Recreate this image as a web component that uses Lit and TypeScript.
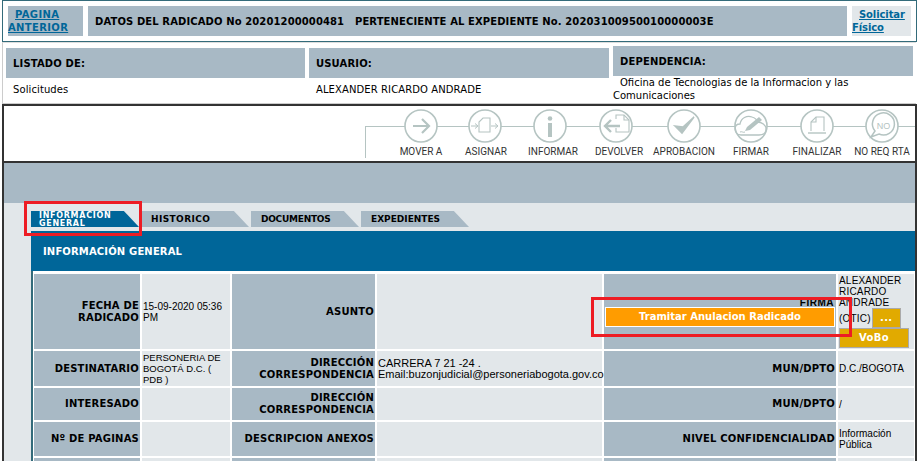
import { LitElement, html, css, svg } from "lit";
import { customElement } from "lit/decorators.js";

const ICONS: Record<string, unknown> = {
  mover: svg`<path d="M10 18h16M19 11l7 7-7 7" stroke-width="2.2"/>`,
  asignar: svg`<path d="M4 18h6M8 15.5l3 2.5-3 2.5" stroke-width="1"/><path d="M12 24v-10l4-4h7v14z" stroke-width="1.1"/><path d="M24 18h6M28 15.5l3 2.5-3 2.5" stroke-width="1"/>`,
  informar: svg`<circle cx="18" cy="10.5" r="2.3" fill="#b5c4c2" stroke="none"/><path d="M18 15v14" stroke-width="4"/>`,
  devolver: svg`<path d="M18 11v-4h8l5 5v12h-13v-4" stroke-width="1.1"/><path d="M26 7v5h5" stroke-width="1.1"/><path d="M7 18h15M13 12l-6 6 6 6" stroke-width="2.4"/>`,
  aprobacion: svg`<path d="M9 18l7 7 12-16-11 10z" fill="#b5c4c2" stroke-width="1.6"/>`,
  firmar: svg`<path d="M8 27c-4 0-6-3-6-6 0-3 2-5 5-5 1-6 7-9 12-7 3 1 5 3 5 5 5 0 9 3 9 7 0 4-3 6-7 6z" stroke-width="1.3"/><path d="M12 23l2-4 12-10 3 3-12 10z" fill="#b5c4c2" stroke="none"/><path d="M7 24c2-1 3 1 5 0" stroke-width="1"/>`,
  finalizar: svg`<path d="M12 23v-9l5-5h8v14" stroke-width="1.1"/><path d="M17 9v5h-5" stroke-width="1.1"/><path d="M9 25h18" stroke-width="1.4"/>`,
  noreq: svg`<path d="M7 29l4-6a11 11 0 1 1 4 3z" stroke-width="1.5"/><text x="19.5" y="20.5" text-anchor="middle" class="no">NO</text>`,
};

type Action = { icon: string; label: string; width: number; shift: number };

const ACTIONS: Action[] = [
  { icon: "mover", label: "MOVER A", width: 64, shift: 0 },
  { icon: "asignar", label: "ASIGNAR", width: 64, shift: 1 },
  { icon: "informar", label: "INFORMAR", width: 66, shift: 3 },
  { icon: "devolver", label: "DEVOLVER", width: 66, shift: 3 },
  { icon: "aprobacion", label: "APROBACION", width: 70, shift: 0 },
  { icon: "firmar", label: "FIRMAR", width: 64, shift: 0 },
  { icon: "finalizar", label: "FINALIZAR", width: 68, shift: 0 },
  { icon: "noreq", label: "NO REQ RTA", width: 62, shift: 0 },
];

@customElement("app-root")
export class AppRoot extends LitElement {
  static styles = css`
    :host {
      display: block;
      position: relative;
      width: 921px;
      height: 461px;
      overflow: hidden;
      background: #fff;
      font-family: "DejaVu Sans", Verdana, sans-serif;
      font-size: 10px;
      color: #000;
    }

    a {
      color: #006699;
      text-decoration: underline;
    }

    .top {
      display: grid;
      grid-template-columns: 75px 759px 59px;
      column-gap: 5px;
      width: 903px;
      height: 30px;
      margin-left: 2px;
      padding: 5px;
      border: 1px solid #336b7a;
      font-weight: bold;
    }

    .top > div {
      background: #a8b9c5;
    }

    .top .link {
      line-height: 13px;
      padding-top: 2px;
      height: 28px;
      text-indent: 7px;
      letter-spacing: 0.35px;
    }

    .top .title {
      display: flex;
      align-items: center;
      padding-left: 7px;
      white-space: pre;
      letter-spacing: 0.11px;
    }

    .top .fisico {
      background: #e2e7ea;
      letter-spacing: -0.1px;
    }

    .info {
      display: grid;
      grid-template-columns: 299px 300px 300px;
      column-gap: 4px;
      height: 62px;
      margin-left: 2px;
      width: 914px;
      box-sizing: border-box;
      padding: 5px 0 0 3px;
      border-top: 1px solid #ddd;
      border-left: 1px solid #ccc;
      border-bottom: 1px solid #ccc;
    }

    .info .head {
      display: flex;
      align-items: center;
      height: 30px;
      padding-left: 7px;
      background: #a8b9c5;
      font-weight: bold;
      letter-spacing: 0.15px;
    }

    .info .value {
      padding: 5px 0 0 7px;
      line-height: 13px;
      letter-spacing: 0.1px;
    }

    .info .dep {
      margin-top: -2px;
    }

    .info .dep .value {
      padding: 0;
      text-indent: 7px;
      letter-spacing: 0;
    }

    .frame {
      width: 911px;
      height: 357px;
      margin-left: 2px;
      border: 2px solid #333;
      border-bottom: none;
      overflow: hidden;
    }

    .toolbar {
      position: relative;
      display: flex;
      height: 57px;
      box-sizing: border-box;
      padding-left: 385px;
      border-bottom: 2px solid #333;
      background: #fff;
    }

    .toolbar::before {
      content: "";
      position: absolute;
      left: 361px;
      right: 0;
      top: 20px;
      height: 1px;
      background: #b5c4c2;
    }

    .toolbar::after {
      content: "";
      position: absolute;
      left: 361px;
      top: 20px;
      width: 1px;
      height: 32px;
      background: #b5c4c2;
    }

    .action {
      position: relative;
      z-index: 1;
      display: flex;
      flex-direction: column;
      align-items: center;
      padding-top: 2px;
    }

    .action svg {
      display: block;
      width: 36px;
      height: 36px;
      fill: none;
      stroke: #b5c4c2;
    }

    .action .ring {
      fill: #fff;
      stroke-width: 1.6;
    }

    .action .no {
      font: 9px "Liberation Sans", sans-serif;
      fill: #b5c4c2;
      stroke: none;
    }

    .action span {
      margin-top: 2px;
      font: 10px/11px Roboto, sans-serif;
      color: #333;
      white-space: nowrap;
    }

    .band {
      height: 40px;
      background: #a8b9c5;
    }

    .panel {
      height: 260px;
      background: #e2e7ea;
      padding: 8px 0 0 27px;
    }

    .tabs {
      display: flex;
      gap: 2px;
      height: 16px;
      margin-bottom: 4px;
    }

    .tab {
      display: flex;
      align-items: center;
      width: 108px;
      box-sizing: border-box;
      padding-left: 10px;
      background: #a8b9c5;
      clip-path: polygon(0 0, 86% 0, 100% 100%, 0 100%);
      font-weight: bold;
      font-size: 9px;
    }

    .tab.wide {
      letter-spacing: 0.4px;
    }

    .tab.tight {
      letter-spacing: -0.25px;
    }

    .tab.active {
      padding: 1px 0 0 8px;
      background: #006699;
      color: #fff;
      font-size: 8px;
      line-height: 8px;
      letter-spacing: 0.7px;
    }

    .section {
      display: flex;
      align-items: center;
      height: 40px;
      padding-left: 12px;
      background: #006699;
      color: #fff;
      font-weight: bold;
      letter-spacing: 0.15px;
    }

    .grid {
      display: grid;
      grid-template-columns: 106px 88px 143px 225px 232px 76px;
      grid-template-rows: 75px 35px 32px 34px 40px;
      gap: 2px;
      padding: 3px 0 0 1px;
      border-left: 2px solid #336b7a;
      background: #fff;
    }

    .label {
      display: flex;
      align-items: center;
      justify-content: flex-end;
      padding-right: 1px;
      background: #a8b9c5;
      text-align: right;
      font-weight: bold;
      line-height: 12px;
      letter-spacing: 0.2px;
    }

    .val {
      display: flex;
      align-items: center;
      padding-left: 1px;
      background: #e2e7ea;
      font: 10px/11px "Liberation Sans", sans-serif;
    }

    .val.dest {
      font-size: 9.5px;
    }

    .val.addr {
      font-size: 11px;
    }

    .firma {
      flex-direction: column;
      align-items: stretch;
      justify-content: flex-end;
      padding: 0 1px 22px;
      background: #a8b9c5;
    }

    .firma .name {
      background: none;
      margin-bottom: -3px;
      letter-spacing: 0.5px;
    }

    .orange {
      height: 18px;
      margin-top: 1px;
      border: 1px solid #fff;
      background: #ff9c00;
      color: #fff;
      font: bold 10px/18px "DejaVu Sans", sans-serif;
      text-align: center;
    }

    .signer {
      display: block;
      padding-top: 1px;
      letter-spacing: 0.2px;
    }

    .signer .row {
      display: flex;
      align-items: center;
      height: 20px;
      gap: 1px;
      white-space: nowrap;
    }

    .btn {
      display: block;
      box-sizing: border-box;
      height: 20px;
      border: 1px solid #aaa;
      background: #e1aa00;
      color: #fff;
      font: bold 10px/18px "DejaVu Sans", sans-serif;
      text-align: center;
      letter-spacing: 0.3px;
    }

    .btn.dots {
      width: 29px;
    }

    .btn.vobo {
      width: 70px;
    }

    .mark {
      position: absolute;
      box-sizing: border-box;
      border: 3px solid #ed1c24;
      pointer-events: none;
    }

    .mark.tab-mark {
      left: 24px;
      top: 201px;
      width: 118px;
      height: 35px;
    }

    .mark.btn-mark {
      left: 591px;
      top: 297px;
      width: 261px;
      height: 40px;
    }
  `;

  private label(text: unknown) {
    return html`<div class="label">${text}</div>`;
  }

  private val(text: unknown) {
    return html`<div class="val">${text}</div>`;
  }

  render() {
    return html`
      <div class="top">
        <div class="link"><a href="#">PAGINA<br />ANTERIOR</a></div>
        <div class="title">DATOS DEL RADICADO No 20201200000481   PERTENECIENTE AL EXPEDIENTE No. 20203100950010000003E</div>
        <div class="link fisico"><a href="#">Solicitar<br />Físico</a></div>
      </div>
      <div class="info">
        <div>
          <div class="head">LISTADO DE:</div>
          <div class="value">Solicitudes</div>
        </div>
        <div>
          <div class="head">USUARIO:</div>
          <div class="value">ALEXANDER RICARDO ANDRADE</div>
        </div>
        <div class="dep">
          <div class="head">DEPENDENCIA:</div>
          <div class="value">Oficina de Tecnologias de la Informacion y las Comunicaciones</div>
        </div>
      </div>
      <div class="frame">
        <div class="toolbar">
          ${ACTIONS.map(
            (a) => html`
              <div class="action" style="width:${a.width}px">
                <svg viewBox="0 0 36 36">
                  <circle class="ring" cx="18" cy="18" r="16"></circle>
                  ${ICONS[a.icon]}
                </svg>
                <span style="transform:translateX(${a.shift}px)">${a.label}</span>
              </div>
            `,
          )}
        </div>
        <div class="band"></div>
        <div class="panel">
          <div class="tabs">
            <div class="tab active">INFORMACION<br />GENERAL</div>
            <div class="tab wide">HISTORICO</div>
            <div class="tab tight">DOCUMENTOS</div>
            <div class="tab">EXPEDIENTES</div>
          </div>
          <div class="section">INFORMACIÓN GENERAL</div>
          <div class="grid">
            ${this.label(html`FECHA DE<br />RADICADO`)}
            ${this.val("15-09-2020 05:36 PM")}
            ${this.label("ASUNTO")}
            ${this.val("")}
            <div class="val firma">
              <div class="name label">FIRMA</div>
              <div class="orange">Tramitar Anulacion Radicado</div>
            </div>
            <div class="val signer">
              ALEXANDER RICARDO ANDRADE
              <div class="row">(OTIC) <span class="btn dots">...</span></div>
              <span class="btn vobo">VoBo</span>
            </div>

            ${this.label("DESTINATARIO")}
            <div class="val dest">PERSONERIA DE BOGOTÁ D.C. ( PDB )</div>
            ${this.label(html`DIRECCIÓN<br />CORRESPONDENCIA`)}
            <div class="val addr">CARRERA 7 21 -24 .<br />Email:buzonjudicial@personeriabogota.gov.co</div>
            ${this.label("MUN/DPTO")}
            ${this.val("D.C./BOGOTA")}

            ${this.label("INTERESADO")}
            ${this.val("")}
            ${this.label(html`DIRECCIÓN<br />CORRESPONDENCIA`)}
            ${this.val("")}
            ${this.label("MUN/DPTO")}
            ${this.val("/")}

            ${this.label("Nº DE PAGINAS")}
            ${this.val("")}
            ${this.label("DESCRIPCION ANEXOS")}
            ${this.val("")}
            ${this.label("NIVEL CONFIDENCIALIDAD")}
            ${this.val("Información Pública")}

            ${this.label("")}
            ${this.val("")}
            ${this.label("")}
            ${this.val("")}
            ${this.label("")}
            ${this.val("")}
          </div>
        </div>
      </div>
      <div class="mark tab-mark"></div>
      <div class="mark btn-mark"></div>
    `;
  }
}
